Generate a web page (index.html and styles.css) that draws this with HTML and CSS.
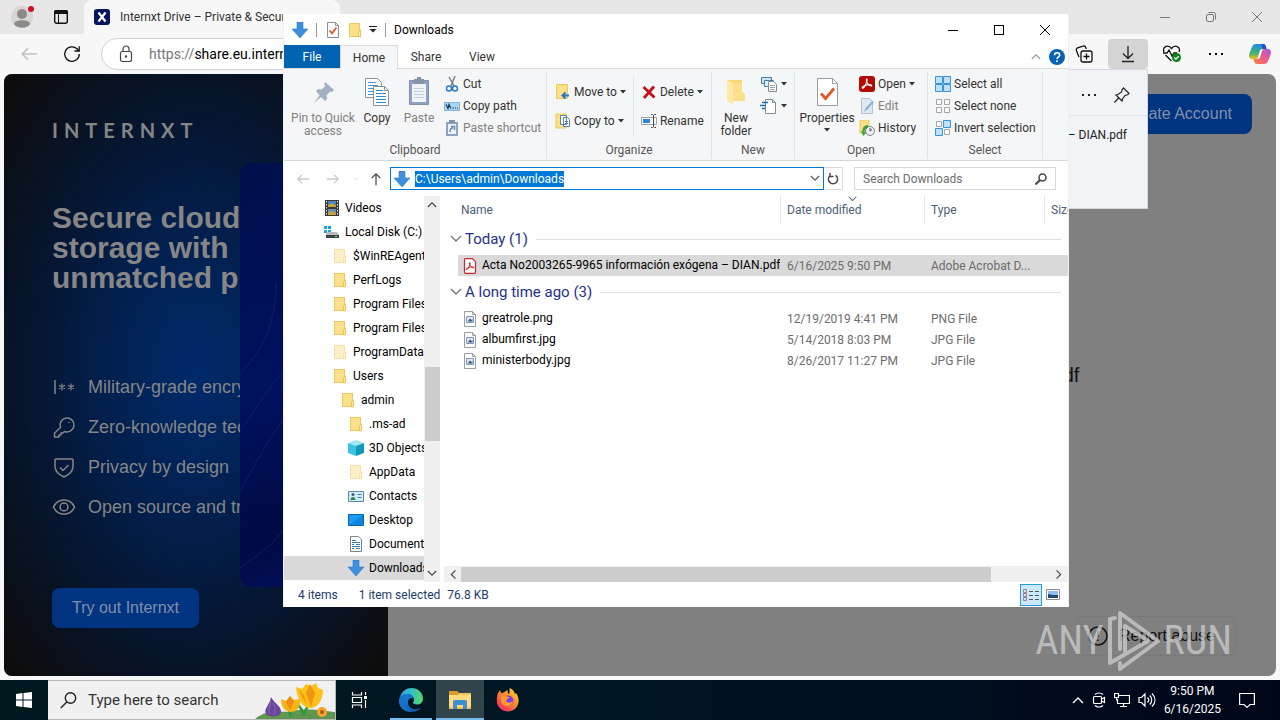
FILE: index.html
```html
<!DOCTYPE html>
<html lang="en">
<head>
    <meta charset="UTF-8">
    <meta name="viewport" content="width=device-width, initial-scale=1.0">
    <title>Downloads</title>
    <link rel="stylesheet" href="styles.css">
</head>
<body>
    <!-- shared icons -->
    <svg class="sprite" aria-hidden="true">
        <symbol id="i-down" viewBox="0 0 16 16">
            <path d="M5 0h6v7h5l-8 9-8-9h5z" fill="#3c8fdc"/>
            <path d="M5 0h6v7h5l-8 9-8-9h5z" fill="none" stroke="#2f7dc6" stroke-width=".6"/>
        </symbol>
        <symbol id="i-folder" viewBox="0 0 16 16">
            <path d="M2 1h11v6.500l1 1V15H2z" fill="#ffe08a"/>
            <path d="M2.500 1.500h10V14.500h-10z" fill="none" stroke="#ecc75a"/>
            <path d="M11.500 15V9.500l2-1.500v7z" fill="#ffe9a8" stroke="#e3b945" stroke-width=".7"/>
        </symbol>
        <symbol id="i-check" viewBox="0 0 16 16">
            <path d="M2.500.5h8l3 3v12h-11z" fill="#fff" stroke="#8a8f96"/>
            <path d="M10.500.5v3h3" fill="none" stroke="#8a8f96"/>
            <path d="M4.500 8.500l2.500 2.800 4.500-5.800" fill="none" stroke="#e2592c" stroke-width="1.800"/>
        </symbol>
        <symbol id="i-image" viewBox="0 0 16 16">
            <path d="M2.500.5h8l3 3v12h-11z" fill="#fff" stroke="#9a9fa6"/>
            <path d="M10.500.5v3h3" fill="none" stroke="#9a9fa6"/>
            <path d="M4.500 5.500h7v6h-7z" fill="#dde6f2" stroke="#8397b3"/>
            <path d="M6 10l2-2.500L9.500 9l1-1v2.500H6z" fill="#3d5b86"/>
        </symbol>
        <symbol id="i-pdf" viewBox="0 0 16 16">
            <path d="M3.500.7h7l3 3v10.600a1 1 0 0 1-1 1h-9a1 1 0 0 1-1-1V1.700a1 1 0 0 1 1-1z" fill="#fff" stroke="#c8242b" stroke-width="1.200"/>
            <path d="M7.800 4.500c-1.200 0 .4 3.500 2 4.700 1.600 1.200 2.600.9 2 .1-.9-1-6.800.2-7.600 1.700-.5 1.100 1 .9 2-.8C7.400 8.200 8.700 4.500 7.800 4.500z" fill="none" stroke="#c8242b"/>
        </symbol>
        <symbol id="i-caret" viewBox="0 0 6 4"><path d="M0 0h6L3 3.500z" fill="currentColor"/></symbol>
        <symbol id="i-chev" viewBox="0 0 12 8"><path d="M1 1l5 5 5-5" fill="none" stroke="currentColor" stroke-width="1.400"/></symbol>
        <symbol id="i-arrow" viewBox="0 0 16 16"><path d="M15 8H2M7 3L2 8l5 5" fill="none" stroke="currentColor" stroke-width="1.500"/></symbol>
        <symbol id="i-min" viewBox="0 0 12 12"><path d="M1 6.500h10" stroke="currentColor"/></symbol>
        <symbol id="i-close" viewBox="0 0 12 12"><path d="M1 1l10 10M11 1L1 11" stroke="currentColor"/></symbol>
        <symbol id="i-dots" viewBox="0 0 16 16"><path d="M1 7h2v2H1zM7 7h2v2H7zM13 7h2v2h-2z" fill="currentColor"/></symbol>
    </svg>

    <div class="browser">
        <div class="browser-title">
            <div class="workspace">
                <button class="icon-btn" aria-label="Profile">
                    <svg width="24" height="24" viewBox="0 0 24 24">
                        <circle cx="11" cy="12" r="11" fill="#d8d6d4"/>
                        <circle cx="11" cy="9" r="5" fill="#8d8a88"/>
                        <path d="M3 19c0-5 16-5 16 0-3 5-13 5-16 0z" fill="#8d8a88"/>
                        <circle cx="20" cy="4" r="3" fill="#d30f25"/>
                    </svg>
                </button>
                <button class="icon-btn" aria-label="Tab actions">
                    <svg width="16" height="16" viewBox="0 0 16 16">
                        <rect x="1.700" y="1.700" width="12.600" height="12.600" rx="2" fill="none" stroke="#111" stroke-width="1.400"/>
                        <path d="M1 3a2 2 0 0 1 2-2h10a2 2 0 0 1 2 2v2H1z" fill="#111"/>
                        <path d="M5.500 5v9" stroke="#111"/>
                    </svg>
                </button>
            </div>
            <div class="tab">
                <svg width="16" height="16" viewBox="0 0 16 16">
                    <rect width="16" height="16" rx="3" fill="#07145e"/>
                    <path d="M4.500 3.500l7 9M11.500 3.500l-7 9" stroke="#fff" stroke-width="2.200"/>
                </svg>
                <span>Internxt Drive – Private &amp; Secure</span>
            </div>
            <div class="browser-caption">
                <button aria-label="Minimize"><svg width="12" height="12"><use href="#i-min"/></svg></button>
                <button aria-label="Restore">
                    <svg width="12" height="12" viewBox="0 0 12 12" fill="none" stroke="currentColor">
                        <rect x="1.500" y="3.500" width="7" height="7" rx="1.500"/>
                        <path d="M3.500 1.500h5a2 2 0 0 1 2 2v5"/>
                    </svg>
                </button>
                <button aria-label="Close"><svg width="12" height="12"><use href="#i-close"/></svg></button>
            </div>
        </div>

        <div class="browser-bar">
            <button class="icon-btn back" aria-label="Back"><svg width="18" height="18"><use href="#i-arrow"/></svg></button>
            <button class="icon-btn" aria-label="Reload">
                <svg width="18" height="18" viewBox="0 0 18 18" fill="none" stroke="#111" stroke-width="1.300">
                    <path d="M16.300 9A7.300 7.300 0 1 1 14 3.800L16 6"/>
                    <path d="M16.200 1.200V6h-4.800"/>
                </svg>
            </button>
            <label class="url">
                <svg width="14" height="18" viewBox="0 0 14 18" fill="none" stroke="#444" stroke-width="1.200">
                    <rect x="1.500" y="6.500" width="11" height="10" rx="2"/>
                    <path d="M4 6.500V4a3 3 0 0 1 6 0v2.500"/>
                    <circle cx="7" cy="11.500" r=".6" fill="#444"/>
                </svg>
                <span>https://</span><input type="text" value="share.eu.internxt.com" aria-label="Address">
            </label>
            <div class="browser-tools">
                <button class="icon-btn" aria-label="Collections">
                    <svg width="18" height="18" viewBox="0 0 18 18" fill="none" stroke="#111" stroke-width="1.300">
                        <rect x="6" y="6" width="11" height="11" rx="2"/>
                        <path d="M11.500 8.500v6M8.500 11.500h6M4 12l-2.600-6.500a2 2 0 0 1 1.200-2.600L8 1.100a2 2 0 0 1 2.600 1.200l.7 1.800"/>
                    </svg>
                </button>
                <button class="icon-btn active" aria-label="Downloads">
                    <svg width="16" height="18" viewBox="0 0 16 18" fill="none" stroke="#222" stroke-width="1.300">
                        <path d="M8 1v12M3 8.500l5 5 5-5M2 16.500h12"/>
                    </svg>
                </button>
                <button class="icon-btn" aria-label="Browser essentials">
                    <svg width="20" height="18" viewBox="0 0 20 18" fill="none" stroke="#111" stroke-width="1.300">
                        <path d="M2 7C0 2 6-1 9.500 3.500 13-1 19 2 17 7M3.500 10l6 6"/>
                        <path d="M1 8h4l2-3 3 6 2-3h3"/>
                        <circle cx="14.500" cy="12.500" r="4.500" fill="#12801c" stroke="none"/>
                        <path d="M12.300 12.500l1.600 1.600 2.800-2.900" stroke="#fff"/>
                    </svg>
                </button>
                <button class="icon-btn" aria-label="Settings"><svg width="16" height="16"><use href="#i-dots"/></svg></button>
                <button class="icon-btn" aria-label="Copilot">
                    <svg width="22" height="20" viewBox="0 0 22 20">
                        <defs>
                            <linearGradient id="cp1" x1="0" y1="0" x2="0" y2="1"><stop offset="0" stop-color="#1b8ee6"/><stop offset=".6" stop-color="#3fb27a"/><stop offset="1" stop-color="#f2c318"/></linearGradient>
                            <linearGradient id="cp2" x1="1" y1="0" x2="0" y2="1"><stop offset="0" stop-color="#a15be8"/><stop offset=".5" stop-color="#ee5a8c"/><stop offset="1" stop-color="#f58a3a"/></linearGradient>
                        </defs>
                        <path d="M7 0h7c2 0 2.500 1 3 3l.5 2h-4c-2 0-2.500 1-3 3l-1.500 5c-.5 1.500-1 2-2.500 2H3c-3 0-3.500-3-2.500-6L3 3c.7-2 2-3 4-3z" fill="url(#cp1)"/>
                        <path d="M15 20H8c-2 0-2.500-1-3-3l-.5-2h4c2 0 2.500-1 3-3L13 7c.5-1.500 1-2 2.500-2H19c3 0 3.500 3 2.500 6L19 17c-.7 2-2 3-4 3z" fill="url(#cp2)"/>
                        <path d="M12 0h2c2 0 2.500 1 3 3l.5 2h-4z" fill="#2352c8"/>
                    </svg>
                </button>
            </div>
        </div>

        <div class="page">
            <aside class="promo">
                <div class="brand">INTERNXT</div>
                <h1>Secure cloud storage with unmatched privacy</h1>
                <ul>
                    <li>
                        <svg width="24" height="24" viewBox="0 0 24 24" fill="none" stroke="currentColor" stroke-width="1.500">
                            <path d="M3 5v14"/>
                            <path d="M10 8.500v7M7 10.300l6 3.500M13 10.300l-6 3.500M19 8.500v7M16 10.300l6 3.500M22 10.300l-6 3.500" stroke-width="1.200"/>
                        </svg>
                        Military-grade encryption
                    </li>
                    <li>
                        <svg width="24" height="24" viewBox="0 0 24 24" fill="none" stroke="currentColor" stroke-width="1.500">
                            <path d="M8.500 12.500a7 7 0 1 1 4 4L11 18H9v2H7v2H2.500v-4z" stroke-linejoin="round"/>
                            <circle cx="17" cy="7.500" r=".8" fill="currentColor" stroke="none"/>
                        </svg>
                        Zero-knowledge technology
                    </li>
                    <li>
                        <svg width="24" height="24" viewBox="0 0 24 24" fill="none" stroke="currentColor" stroke-width="1.500">
                            <path d="M4 4h16a1 1 0 0 1 1 1v6c0 6-4.500 9-9 11-4.500-2-9-5-9-11V5a1 1 0 0 1 1-1z"/>
                            <path d="M8 12.500l3 3 5.500-5.500"/>
                        </svg>
                        Privacy by design
                    </li>
                    <li>
                        <svg width="24" height="24" viewBox="0 0 24 24" fill="none" stroke="currentColor" stroke-width="1.500">
                            <path d="M1.500 12C5.500 2.500 18.500 2.500 22.500 12 18.500 21.500 5.500 21.500 1.500 12z"/>
                            <circle cx="12" cy="12" r="4"/>
                        </svg>
                        Open source and transparent
                    </li>
                </ul>
                <a class="page-btn" href="#">Try out Internxt</a>
                <div class="promo-art">
                    <svg width="148" height="424" viewBox="0 0 148 424" fill="none" stroke="#1c3f93" stroke-opacity=".35">
                        <path d="M0 210C22 190 36 160 36 120M0 268C20 240 34 215 60 190M0 330C40 250 60 240 80 200M0 405C20 390 40 380 60 340"/>
                    </svg>
                </div>
            </aside>
            <main class="share">
                <a class="page-btn account" href="#">Create Account</a>
                <p>Acta No2003265-9965 información exógena – DIAN.pdf</p>
                <button class="report">
                    <svg width="22" height="22" viewBox="0 0 22 22" fill="none" stroke="#141414" stroke-width="1.500">
                        <circle cx="11" cy="11" r="9"/>
                        <path d="M11 6v6M11 14.500v1.500"/>
                    </svg>
                    Report abuse
                </button>
            </main>
        </div>
    </div>

    <div class="flyout">
        <div class="flyout-head">
            <button class="icon-btn" aria-label="More"><svg width="16" height="16"><use href="#i-dots"/></svg></button>
            <button class="icon-btn" aria-label="Pin">
                <svg width="18" height="18" viewBox="0 0 18 18" fill="none" stroke="#222" stroke-width="1.200">
                    <path d="M10.500 2l5.500 5.500-1.500 1.300-2.500.7-2.500 3.500-.5 2L3 9l2-.5L8.500 6l.7-2.500zM5.500 12L1.500 16.500"/>
                </svg>
            </button>
        </div>
        <a href="#">– DIAN.pdf</a>
    </div>

    <div class="explorer">
        <div class="titlebar">
            <svg width="16" height="16"><use href="#i-down"/></svg>
            <i class="bar"></i>
            <svg width="16" height="16"><use href="#i-check"/></svg>
            <svg width="16" height="16"><use href="#i-folder"/></svg>
            <svg class="qat" width="8" height="7" viewBox="0 0 8 7"><path d="M0 .5h8" stroke="#222"/><path d="M.5 3h7L4 6.500z" fill="#222"/></svg>
            <i class="bar"></i>
            <span>Downloads</span>
            <div class="caption">
                <button aria-label="Minimize"><svg width="12" height="12"><use href="#i-min"/></svg></button>
                <button aria-label="Maximize"><svg width="12" height="12" viewBox="0 0 12 12"><rect x="1.500" y="1.500" width="9" height="9" fill="none" stroke="#000"/></svg></button>
                <button aria-label="Close"><svg width="12" height="12"><use href="#i-close"/></svg></button>
            </div>
        </div>

        <div class="menu">
            <button class="file">File</button>
            <button class="current">Home</button>
            <button>Share</button>
            <button>View</button>
            <span class="menu-end">
                <svg class="flip" width="10" height="7"><use href="#i-chev"/></svg>
                <svg width="16" height="16" viewBox="0 0 16 16">
                    <circle cx="8" cy="8" r="8" fill="#0a62b5"/>
                    <path d="M5.500 6.200c0-3.400 5.200-3.200 5.200-.3C10.700 7.800 8 7.800 8 10M8 11.200v1.800" fill="none" stroke="#fff" stroke-width="1.600"/>
                </svg>
            </span>
        </div>

        <div class="ribbon">
            <section class="group">
                <div class="tools clipboard">
                    <button class="big off">
                        <svg width="32" height="32" viewBox="0 0 32 32" fill="#a3b0c2"><path d="M18 6l9 8-2 2-2-.5-3.500 4 .5 3.500-2 2-4-4-7 6 5.500-7.500L9 15l2-2 3.500.5L18.500 10 17 8z"/></svg>
                        Pin to Quick access
                    </button>
                    <button class="big">
                        <svg width="32" height="32" viewBox="0 0 32 32">
                            <path d="M4.500 2.500h12l4 4v15h-16z" fill="#fff" stroke="#8c9199"/>
                            <path d="M7 6.500h8M7 9.500h10M7 12.500h10M7 15.500h10M7 18.500h10" stroke="#4a94d8"/>
                            <path d="M12.500 10.500h11l4 4v15h-15z" fill="#fff" stroke="#8c9199"/>
                            <path d="M23.500 10.500v4h4" fill="none" stroke="#8c9199"/>
                            <path d="M15 14.500h7M15 17.500h10M15 20.500h10M15 23.500h10M15 26.500h10" stroke="#2f86d6"/>
                        </svg>
                        Copy
                    </button>
                    <button class="big off">
                        <svg width="32" height="32" viewBox="0 0 32 32">
                            <path d="M6.500 4.500h19v24h-19z" fill="#8fa2c0" stroke="#7e90ad"/>
                            <path d="M9 8h14v18H9z" fill="#f0f4fa"/>
                            <path d="M11 3h10v5H11zM14 1h4v3h-4z" fill="#8693a8"/>
                            <path d="M11 12.500h10M11 15.500h10M11 18.500h10M11 21.500h10" stroke="#c3cfe0"/>
                        </svg>
                        Paste
                    </button>
                    <div class="stack">
                        <button>
                            <svg width="16" height="16" viewBox="0 0 16 16" fill="none"><path d="M5 1l5 9M11 0L7 10" stroke="#76808c" stroke-width="1.500"/><circle cx="5" cy="12.500" r="2.500" stroke="#2d7fc8" stroke-width="1.500"/><circle cx="11" cy="12.500" r="2.500" stroke="#2d7fc8" stroke-width="1.500"/></svg>
                            Cut
                        </button>
                        <button>
                            <svg width="16" height="16" viewBox="0 0 16 16"><rect x=".5" y="4.500" width="15" height="8" fill="#a8d4f5" stroke="#8ab4d6"/><path d="M2 6.500l2 4 1-4 2 4M8.500 10h1.500M11 10h1M13 10h1" stroke="#16385c" fill="none" stroke-width="1.200"/></svg>
                            Copy path
                        </button>
                        <button class="off">
                            <svg width="16" height="16" viewBox="0 0 16 16"><path d="M2 2h12v14H2z" fill="#8fa2c0"/><path d="M4 4h8v10H4z" fill="#edf2f9"/><path d="M5 0h6v3H5z" fill="#7e90ad"/><path d="M6 12c0-3 1-4 3-4M7 6.500h3.500V10" fill="none" stroke="#6f88b0" stroke-width="1.500"/></svg>
                            Paste shortcut
                        </button>
                    </div>
                </div>
                <h2>Clipboard</h2>
            </section>

            <section class="group">
                <div class="tools organize">
                    <div class="stack wide">
                        <button>
                            <svg width="16" height="16" viewBox="0 0 16 16"><path d="M1.500.5h11v14h-11z" fill="#ffe08a" stroke="#ecc75a"/><path d="M14 11.500H8M10.500 8.500l-3 3 3 3" fill="none" stroke="#2a76c4" stroke-width="2"/></svg>
                            Move to <svg width="6" height="4"><use href="#i-caret"/></svg>
                        </button>
                        <button>
                            <svg width="16" height="16" viewBox="0 0 16 16"><path d="M1 1h10v14H1z" fill="#ffe08a" stroke="#ecc75a"/><path d="M5.500 2.500h6v9h-6zM8.500 4.500h4l2 2v7h-6z" fill="#fff" stroke="#5580b4"/><path d="M10 8.500h3M10 10.500h3" stroke="#5580b4"/></svg>
                            Copy to <svg width="6" height="4"><use href="#i-caret"/></svg>
                        </button>
                    </div>
                    <div class="stack wide ruled">
                        <button>
                            <svg width="16" height="16" viewBox="0 0 16 16"><path d="M2.500 3l11 10.500M13 2.500L3 14" stroke="#c8101c" stroke-width="2.800"/></svg>
                            Delete <svg width="6" height="4"><use href="#i-caret"/></svg>
                        </button>
                        <button>
                            <svg width="16" height="16" viewBox="0 0 16 16" fill="none"><path d="M.5 4.500h15v7H.5z" fill="#fff" stroke="#9aa3ad"/><path d="M2 6h7v4H2z" fill="#2f86d0"/><path d="M12.500 2v12M10 1.500h1.500l1 1 1-1H15M10 14.500h1.500l1-1 1 1H15" stroke="#444"/></svg>
                            Rename
                        </button>
                    </div>
                </div>
                <h2>Organize</h2>
            </section>

            <section class="group">
                <div class="tools new">
                    <button class="big">
                        <svg width="32" height="32" viewBox="0 0 32 32"><path d="M7 4h15v12l2 3v6H9z" fill="#f8d775"/><path d="M7 4l6 3v22l-6-4z" fill="#ffe9a6"/><path d="M13 7h9v9l3 2v7H13z" fill="#fbdf8a"/></svg>
                        New folder
                    </button>
                    <div class="stack">
                        <button aria-label="New item">
                            <svg width="18" height="18" viewBox="0 0 18 18"><path d="M1.500 2.500h10v6h-10z" fill="#cfe3f3" stroke="#3f7fae"/><path d="M4.500 5.500h9v6h-9z" fill="#e4eef7" stroke="#3f7fae"/><path d="M8.500 6.500h5l3 3v7h-8z" fill="#fff" stroke="#858b92"/><path d="M10 10.500h5M10 12.500h5M10 14.500h5" stroke="#9aa3ad"/></svg>
                            <svg width="6" height="4"><use href="#i-caret"/></svg>
                        </button>
                        <button aria-label="Easy access">
                            <svg width="18" height="18" viewBox="0 0 18 18"><path d="M5.500 2.500h7l3 3v11h-10z" fill="#fff" stroke="#858b92"/><path d="M12.500 2.500v3h3" fill="none" stroke="#858b92"/><path d="M2 5.500h6M0 8.500h6M2 11.500h3" stroke="#1c6fb8" stroke-width="1.300"/></svg>
                            <svg width="6" height="4"><use href="#i-caret"/></svg>
                        </button>
                    </div>
                </div>
                <h2>New</h2>
            </section>

            <section class="group">
                <div class="tools open">
                    <button class="big">
                        <svg width="32" height="32" viewBox="0 0 32 32"><path d="M6.500 2.500h15l5 5v22h-20z" fill="#fff" stroke="#9a9fa6"/><path d="M21.500 2.500v5h5" fill="none" stroke="#9a9fa6"/><path d="M10 17.500l4.500 5 8.500-10" fill="none" stroke="#e2592c" stroke-width="2.800"/></svg>
                        Properties
                        <svg width="6" height="4"><use href="#i-caret"/></svg>
                    </button>
                    <div class="stack">
                        <button>
                            <svg width="16" height="16" viewBox="0 0 16 16"><rect width="16" height="16" rx="3" fill="#b30b00"/><path d="M7.800 3c-1.400 0 .2 4.500 2.200 6 2 1.300 3.300 1 2.500.1-1-1.200-8.500.3-9.200 2.400-.4 1.400 1.200 1 2.400-1.100C7.200 7.700 8.800 3 7.800 3z" fill="none" stroke="#fff" stroke-width="1.100"/></svg>
                            Open <svg width="6" height="4"><use href="#i-caret"/></svg>
                        </button>
                        <button class="off">
                            <svg width="16" height="16" viewBox="0 0 16 16"><path d="M2.500.5h8l3 3v12h-11z" fill="#dfe8f3" stroke="#b4c1d2"/><path d="M15 4l-7 8-2.500 1.500L6 11l7-8z" fill="#8fb0d4"/></svg>
                            Edit
                        </button>
                        <button>
                            <svg width="16" height="16" viewBox="0 0 16 16"><path d="M1 0h9v13H1z" fill="#ffe08a" stroke="#ecc75a"/><circle cx="11" cy="11" r="4.500" fill="#e8edf2" stroke="#7b848e"/><path d="M11 8v3l2-1.500" stroke="#555" fill="none"/><path d="M9 5C4 5 3 9 3.500 12L1.500 11l3 5 3-4-2 .500C5.500 10 6.500 8 9 7.500z" fill="#3aa63a"/></svg>
                            History
                        </button>
                    </div>
                </div>
                <h2>Open</h2>
            </section>

            <section class="group">
                <div class="tools select">
                    <div class="stack">
                        <button>
                            <svg width="16" height="16" viewBox="0 0 16 16" fill="#bfe0fa" stroke="#3a94dc"><path d="M.5.5h7v7h-7zM8.500.5h7v7h-7zM.5 8.500h7v7h-7zM8.500 8.500h7v7h-7z"/></svg>
                            Select all
                        </button>
                        <button>
                            <svg width="16" height="16" viewBox="0 0 16 16" fill="#fff" stroke="#a5a5a5"><path d="M1.500 1.500h5v5h-5zM9.500 1.500h5v5h-5zM1.500 9.500h5v5h-5zM9.500 9.500h5v5h-5z"/></svg>
                            Select none
                        </button>
                        <button>
                            <svg width="16" height="16" viewBox="0 0 16 16"><path d="M1.500 1.500h5v5h-5zM9.500 9.500h5v5h-5z" fill="#fff" stroke="#a5a5a5"/><path d="M8.500.5h7v7h-7zM.5 8.500h7v7h-7z" fill="#bfe0fa" stroke="#3a94dc"/></svg>
                            Invert selection
                        </button>
                    </div>
                </div>
                <h2>Select</h2>
            </section>
        </div>

        <div class="nav">
            <button class="dim" aria-label="Back"><svg width="14" height="14"><use href="#i-arrow"/></svg></button>
            <button class="dim turn" aria-label="Forward"><svg width="14" height="14"><use href="#i-arrow"/></svg></button>
            <button class="dim recent" aria-label="Recent"><svg width="6" height="4"><use href="#i-chev"/></svg></button>
            <button class="up" aria-label="Up"><svg width="14" height="14"><use href="#i-arrow"/></svg></button>
            <div class="address">
                <svg width="16" height="16"><use href="#i-down"/></svg>
                <input id="address" type="text" value="C:\Users\admin\Downloads" aria-label="Path">
                <svg width="10" height="7"><use href="#i-chev"/></svg>
            </div>
            <button class="refresh" aria-label="Refresh">
                <svg width="12" height="12" viewBox="0 0 12 12" fill="none" stroke="#444" stroke-width="1.400"><path d="M8.500 2.300A4.600 4.600 0 1 1 3.500 2.300M3 0v3.500h3.500"/></svg>
            </button>
            <label class="search">
                <input type="text" placeholder="Search Downloads" aria-label="Search Downloads">
                <svg width="12" height="12" viewBox="0 0 12 12" fill="none" stroke="#444" stroke-width="1.500"><circle cx="7.500" cy="4.500" r="3.500"/><path d="M5 7L.5 11.500" stroke-width="2"/></svg>
            </label>
        </div>

        <div class="content">
            <div class="side">
                <ul class="tree">
                    <li class="l1"><svg width="16" height="16" viewBox="0 0 16 16"><path d="M1 0h14v16H1z" fill="#3a3a3a"/><path d="M4 1h8v6H4z" fill="#4f83c4"/><path d="M4 9h8v6H4z" fill="#6c8fb0"/><path d="M4 5l4-2 4 3v1H4zM4 13l3-2 5 2v2H4z" fill="#c9a43c"/><path d="M2.500 1v14M13.500 1v14" stroke="#ddd" stroke-dasharray="1.500 1.500"/></svg>Videos</li>
                    <li class="l1"><svg width="16" height="16" viewBox="0 0 16 16"><path d="M0 2h3v3H0zM4 2h3v3H4zM0 6h3v3H0zM4 6h3v3H4z" fill="#19a7e0"/><path d="M3 8h10l2 3H2z" fill="#b9bec3"/><path d="M2 11h13v3H2z" fill="#3b4146"/><path d="M11 12.500h2" stroke="#5dff6a"/></svg>Local Disk (C:)</li>
                    <li class="l2 faded"><svg width="16" height="16"><use href="#i-folder"/></svg>$WinREAgent</li>
                    <li class="l2"><svg width="16" height="16"><use href="#i-folder"/></svg>PerfLogs</li>
                    <li class="l2"><svg width="16" height="16"><use href="#i-folder"/></svg>Program Files</li>
                    <li class="l2"><svg width="16" height="16"><use href="#i-folder"/></svg>Program Files</li>
                    <li class="l2 faded"><svg width="16" height="16"><use href="#i-folder"/></svg>ProgramData</li>
                    <li class="l2"><svg width="16" height="16"><use href="#i-folder"/></svg>Users</li>
                    <li class="l3"><svg width="16" height="16"><use href="#i-folder"/></svg>admin</li>
                    <li class="l4"><svg width="16" height="16"><use href="#i-folder"/></svg>.ms-ad</li>
                    <li class="l4"><svg width="16" height="16" viewBox="0 0 16 16"><path d="M0 3l8-3 8 3-8 3z" fill="#9be6f5"/><path d="M0 3l8 3v10l-8-3z" fill="#38c3df"/><path d="M16 3L8 6v10l8-3z" fill="#1496bd"/></svg>3D Objects</li>
                    <li class="l4 faded"><svg width="16" height="16"><use href="#i-folder"/></svg>AppData</li>
                    <li class="l4"><svg width="16" height="16" viewBox="0 0 16 16"><path d="M.5 3.500h15v10H.5z" fill="#d5ecf7" stroke="#5e8aa8"/><circle cx="5" cy="6.500" r="1.500" fill="#2d5f8a"/><path d="M2.500 12c0-4 5-4 5 0z" fill="#2a8a50"/><path d="M9.500 6.500h4M9.500 9.500h4" stroke="#3c86c0"/></svg>Contacts</li>
                    <li class="l4"><svg width="16" height="16" viewBox="0 0 16 16"><path d="M.5 2.500h15v11H.5z" fill="#1b9af0" stroke="#0b62a8"/><path d="M1 13l14-10v10z" fill="#0a86e0"/></svg>Desktop</li>
                    <li class="l4"><svg width="16" height="16" viewBox="0 0 16 16"><path d="M2.500.5h8l3 3v12h-11z" fill="#fff" stroke="#7b848e"/><path d="M4 4.500h4M4 6.500h8M4 8.500h2M8 8.500h4M4 10.500h8M4 12.500h2M8 12.500h4" stroke="#2f7fb8"/></svg>Documents</li>
                    <li class="l4 selected"><svg width="16" height="16"><use href="#i-down"/></svg>Downloads</li>
                </ul>
                <div class="vscroll">
                    <svg class="flip" width="10" height="7"><use href="#i-chev"/></svg>
                    <i></i>
                    <svg width="10" height="7"><use href="#i-chev"/></svg>
                </div>
            </div>

            <div class="files">
                <table>
                    <colgroup><col><col class="c-date"><col class="c-type"><col class="c-size"></colgroup>
                    <thead>
                        <tr><th>Name</th><th class="sorted">Date modified<svg width="9" height="6"><use href="#i-chev"/></svg></th><th>Type</th><th>Size</th></tr>
                    </thead>
                    <tbody>
                        <tr class="section"><th colspan="4"><span><svg width="12" height="8"><use href="#i-chev"/></svg>Today (1)</span></th></tr>
                        <tr class="picked"><td><svg width="16" height="16"><use href="#i-pdf"/></svg>Acta No2003265-9965 información exógena – DIAN.pdf</td><td>6/16/2025 9:50 PM</td><td>Adobe Acrobat D...</td><td></td></tr>
                        <tr class="section"><th colspan="4"><span><svg width="12" height="8"><use href="#i-chev"/></svg>A long time ago (3)</span></th></tr>
                        <tr><td><svg width="16" height="16"><use href="#i-image"/></svg>greatrole.png</td><td>12/19/2019 4:41 PM</td><td>PNG File</td><td></td></tr>
                        <tr><td><svg width="16" height="16"><use href="#i-image"/></svg>albumfirst.jpg</td><td>5/14/2018 8:03 PM</td><td>JPG File</td><td></td></tr>
                        <tr><td><svg width="16" height="16"><use href="#i-image"/></svg>ministerbody.jpg</td><td>8/26/2017 11:27 PM</td><td>JPG File</td><td></td></tr>
                    </tbody>
                </table>
                <div class="hscroll">
                    <svg class="left" width="10" height="7"><use href="#i-chev"/></svg>
                    <i></i>
                    <svg class="right" width="10" height="7"><use href="#i-chev"/></svg>
                </div>
            </div>
        </div>

        <div class="status">
            <span>4 items</span>
            <span>1 item selected</span>
            <span class="size">76.8 KB</span>
            <div class="views">
                <button class="on" aria-label="Details"><svg width="16" height="14" viewBox="0 0 16 14" fill="none"><path d="M.5 1.500h3v3h-3zM.5 5.500h3v3h-3zM.5 9.500h3v3h-3z" stroke="#a07c88"/><path d="M6 3.500h4M12 3.500h4M6 7.500h4M12 7.500h4M6 11.500h4M12 11.500h4" stroke="#555"/></svg></button>
                <button aria-label="Large icons"><svg width="14" height="11" viewBox="0 0 14 11"><path d="M.5.5h13v10H.5z" fill="#fff" stroke="#8c8c9c"/><path d="M2 2h10v7H2z" fill="#8fc1ef"/><path d="M2 5l5 1 5 0v3H2z" fill="#24486e"/></svg></button>
            </div>
        </div>
    </div>

    <div class="watermark" aria-hidden="true">
        <span>ANY</span>
        <svg width="56" height="64" viewBox="0 0 56 64" fill="none" stroke="#c9c9c9" stroke-width="4" stroke-linejoin="round" stroke-linecap="round">
            <path d="M14 40V4l38 28-38 28v-6"/>
            <path d="M9 9l-5 1v44L42 32 19 17v25"/>
        </svg>
        <span>RUN</span>
    </div>

    <footer class="taskbar">
        <button class="start" aria-label="Start"><svg width="16" height="16" viewBox="0 0 16 16" fill="#fff"><path d="M0 2l6.500-1v6.500H0zM7.500.9L16 0v7.500H7.500zM0 8.500h6.500V15L0 14zM7.500 8.500H16V16l-8.500-1z"/></svg></button>
        <label class="find">
            <svg width="17" height="17" viewBox="0 0 17 17" fill="none" stroke="#222" stroke-width="1.400"><circle cx="10.500" cy="6" r="5.200"/><path d="M6.800 10L.8 16"/></svg>
            <input type="text" placeholder="Type here to search" aria-label="Search">
            <svg class="flowers" width="80" height="38" viewBox="0 0 80 38">
                <path d="M0 38C12 28 25 31 34 31 50 26 68 30 80 31v7z" fill="#5f9650"/>
                <path d="M36 36c-1-6-3-8-7-11M49 34c-2-7-5-9-9-13M49 34c1-7 4-8 9-14" fill="none" stroke="#2f9a3c" stroke-width="2.500"/>
                <path d="M16 16c4 7 10 9 10 15 0 5-12 6-15 2-3-5 4-9 5-17z" fill="#6a459c"/>
                <path d="M16 20c-1 6-3 8-1 13M18 22c3 5 2 8 1 12" fill="none" stroke="#8b67b8"/>
                <path d="M26 18l5 2 4-5 4 4 6-1c1 9-4 13-9 13s-10-4-10-13z" fill="#f7b416"/>
                <path d="M35 15l4 6-4 8-4-8z" fill="#ee8b12"/>
                <path d="M41 6l6 2 4-5 5 2 5-3 2 5 5 2c0 11-6 18-13 18S42 19 41 6z" fill="#fcc21a"/>
                <path d="M55 3l5 9-4 14-5-14zM43 8l6 6 3 11z" fill="#f0960f"/>
                <circle cx="67" cy="31" r="5" fill="#f6a52a"/><circle cx="67" cy="31" r="2" fill="#a85a14"/>
            </svg>
        </label>
        <button class="app" aria-label="Task View"><svg width="18" height="18" viewBox="0 0 18 18" fill="none" stroke="#fff" stroke-width="1.200"><path d="M1.500 1v3h9V1M1.500 6.500h9v5h-9zM1.500 17v-3h9v3M14.500 1v3M14.500 9v8"/><path d="M13 5h3v3h-3z" fill="#fff" stroke="none"/></svg></button>
        <button class="app running" aria-label="Edge">
            <svg width="24" height="24" viewBox="0 0 24 24">
                <defs>
                    <linearGradient id="ed1" x1="0" y1="0" x2="1" y2="0"><stop offset="0" stop-color="#2aa3e8"/><stop offset=".5" stop-color="#32c1c8"/><stop offset="1" stop-color="#5ed660"/></linearGradient>
                    <linearGradient id="ed2" x1="0" y1="0" x2="1" y2="1"><stop offset="0" stop-color="#1a8bdc"/><stop offset="1" stop-color="#0c4fa0"/></linearGradient>
                </defs>
                <path d="M1 10C2 3 8 0 12.500 0 19 0 24 5 24 10.500c0 4-3 6-6 6-2.500 0-4-1-4-2 0-.6 1-1.200 1-3C15 8 11 6 8 6c-3 0-6 2-7 4z" fill="url(#ed1)"/>
                <path d="M0 13C0 8 4 6 8 6c3 0 7 2 7 5.500 0-2-6-2.500-6 3C9 19 13 22 18 21c2-.4 3-1 3.700-1-.7 1-4 4-9.700 4C5 24 0 19 0 13z" fill="url(#ed2)"/>
                <path d="M8 6.500c-4 4-3 13 3 17C5 23 0 19 0 13 0 9 4 6.500 8 6.500z" fill="#1472c9"/>
            </svg>
        </button>
        <button class="app running focus" aria-label="File Explorer">
            <svg width="22" height="20" viewBox="0 0 22 20">
                <path d="M0 1h8l2 2h12v16H0z" fill="#f5c35a"/><path d="M0 1h8l2 2-1 2H0z" fill="#d89b28"/><path d="M0 5h22v12H0z" fill="#ffdb80"/>
                <path d="M4 19v-7a2 2 0 0 1 2-2h10a2 2 0 0 1 2 2v7h-4v-4H8v4z" fill="#3d8fd1"/>
            </svg>
        </button>
        <button class="app" aria-label="Firefox">
            <svg width="24" height="24" viewBox="0 0 24 24">
                <defs><linearGradient id="ff" x1="1" y1="0" x2=".2" y2="1"><stop offset="0" stop-color="#ffe03a"/><stop offset=".45" stop-color="#ff9226"/><stop offset="1" stop-color="#f0246c"/></linearGradient></defs>
                <path d="M2 5l2-3 1 3 3-.5C9.500 3 11 2 12 2c-1 1.500-.5 3 1 4 1-2 .5-4 .5-6 3 1 4.500 3 5.500 6l1-1c2 3 3 6 2.500 9-1 6-5 9.500-10.500 9.500S1 19.500.8 13.500C.7 10 1 7 2 5z" fill="url(#ff)"/>
                <circle cx="12.500" cy="12.500" r="5" fill="#7a3fe0"/>
                <path d="M5 9c3-2 6 0 8.500 0-.5 2-3 1.500-3.500 3.500 1 3 5 2.500 7 .5-1 5-7 6.500-10 3.500C5 14.500 4.500 12 5 9z" fill="#ff9a2c"/>
            </svg>
        </button>
        <div class="tray">
            <svg class="flip" width="12" height="8"><use href="#i-chev"/></svg>
            <svg width="14" height="16" viewBox="0 0 14 16" fill="none" stroke="#fff" stroke-width="1.200"><path d="M3 2.500C5 .5 9 .5 11 2.500M3 13.500c2 2 6 2 8 0"/><rect x="1.500" y="4.500" width="8" height="7" rx="1"/><path d="M9.500 7l3-1.500v5L9.500 9"/></svg>
            <svg width="16" height="16" viewBox="0 0 16 16" fill="none" stroke="#fff" stroke-width="1.200"><path d="M4.500 3.500h11v8H3.500V7M9.500 11.500v3M6 14.500h7M.5 1.500h4v4h-4zM2.500 5.500v3"/></svg>
            <svg width="18" height="16" viewBox="0 0 18 16" fill="none" stroke="#fff" stroke-width="1.200"><path d="M1 5.500h2.500L7 2v12l-3.500-3.500H1zM9.500 5.500c1.500 1.500 1.500 3.500 0 5M11.800 3.500c2.500 2.500 2.500 6.500 0 9M14 1.500c4 4 4 9 0 13"/></svg>
            <time>9:50 PM<br>6/16/2025</time>
            <svg class="note" width="16" height="16" viewBox="0 0 16 16" fill="none" stroke="#fff" stroke-width="1.200"><path d="M.6 1.500h14.800v11H11L8 15.400 5 12.500H.6z"/></svg>
        </div>
    </footer>

    <script>
        // keep the path highlighted when the window opens
        document.getElementById('address').select();
    </script>
</body>
</html>
```
FILE: styles.css
```css
* {
    box-sizing: border-box;
}

body {
    margin: 0;
    height: 100vh;
    display: flex;
    flex-direction: column;
    position: relative;
    overflow: hidden;
    font-family: Roboto, "Open Sans", sans-serif;
    font-size: 12px;
    line-height: 16px;
    color: #000;
    background: #f7f7f7;
}

button,
input {
    font: inherit;
    color: inherit;
    border: none;
    background: none;
    padding: 0;
    margin: 0;
    outline: none;
    min-width: 0;
}

a {
    color: inherit;
    text-decoration: none;
}

svg {
    flex: none;
    display: block;
}

ul {
    list-style: none;
    margin: 0;
    padding: 0;
}

.sprite {
    position: absolute;
    width: 0;
    height: 0;
}

.flip {
    transform: rotate(180deg);
}

/* browser */
.browser {
    flex: 1;
    min-height: 0;
    display: flex;
    flex-direction: column;
}

.browser-title {
    height: 34px;
    display: flex;
    background: #e7e7e7;
}

.icon-btn {
    display: flex;
    align-items: center;
    justify-content: center;
}

.workspace {
    width: 84px;
    display: flex;
    align-items: center;
    gap: 18px;
    padding-left: 11px;
}

.tab {
    width: 256px;
    display: flex;
    align-items: center;
    gap: 10px;
    padding-left: 10px;
    background: #f7f7f7;
    border-radius: 8px 8px 0 0;
    color: #333;
    white-space: nowrap;
    overflow: hidden;
}

.browser-caption {
    margin-left: auto;
    display: flex;
    color: #777;
}

.browser-caption button {
    width: 46px;
    display: flex;
    align-items: center;
    justify-content: center;
}

.browser-bar {
    height: 40px;
    display: flex;
    align-items: center;
    gap: 25px;
    padding-left: 20px;
    background: #f7f7f7;
}

.back {
    color: #c4c4c4;
}

.url {
    flex: 1;
    height: 32px;
    margin-left: -5px;
    display: flex;
    align-items: center;
    padding: 0 17px;
    border: 1px solid #d0d0d0;
    border-radius: 16px;
    background: #fff;
    font-size: 14px;
}

.url svg {
    margin-right: 16px;
}

.url span {
    color: #767676;
}

.url input {
    flex: 1;
}

.browser-tools {
    display: flex;
    gap: 4px;
}

.browser-tools .icon-btn {
    width: 40px;
    height: 30px;
    border-radius: 4px;
}

.browser-tools .active {
    background: #d4d4d4;
}

.page {
    flex: 1;
    min-height: 0;
    margin: 0 4px 4px;
    display: flex;
    border-radius: 8px;
    overflow: hidden;
    background: #808080;
    font-family: "Liberation Sans", sans-serif;
    font-size: 16px;
}

.promo {
    width: 384px;
    padding: 44px 48px;
    position: relative;
    overflow: hidden;
    color: #868686;
    background: radial-gradient(ellipse at 50% 50%, #002a6c 0%, #021f4c 35%, #07142b 65%, #0d0d0d 95%);
}

.brand {
    font-family: Lato, sans-serif;
    font-weight: 700;
    font-size: 20px;
    line-height: 24px;
    letter-spacing: 6px;
}

.promo h1 {
    margin: 61px 0 74px;
    font-size: 30px;
    line-height: 30px;
}

.promo li {
    display: flex;
    align-items: center;
    gap: 12px;
    height: 40px;
    font-size: 18px;
    white-space: nowrap;
}

.page-btn {
    display: inline-block;
    padding: 0 20px;
    line-height: 40px;
    border-radius: 8px;
    background: #003380;
    color: #8090ab;
}

.promo .page-btn {
    margin-top: 61px;
}

.promo-art {
    position: absolute;
    top: 89px;
    left: 236px;
    right: 0;
    height: 424px;
    border-radius: 12px 0 0 12px;
    background: linear-gradient(160deg, #000f4c, #00115e 50%, #000a44 80%, #00105e);
}

.share {
    flex: 1;
    display: flex;
    flex-direction: column;
    align-items: flex-end;
    padding: 20px 24px;
    color: #111;
}

.share p {
    margin: auto;
    font-size: 20px;
}

.report {
    display: flex;
    align-items: center;
    gap: 10px;
    height: 40px;
    margin-right: 16px;
    padding: 0 20px 0 10px;
    border: 1px solid #797979;
    border-radius: 8px;
}

/* downloads popup of the browser */
.flyout {
    position: absolute;
    top: 69px;
    right: 132px;
    width: 320px;
    height: 140px;
    border: 1px solid #d5d8dc;
    background: #f1f3f7;
    color: #222;
}

.flyout-head {
    height: 46px;
    display: flex;
    align-items: center;
    justify-content: flex-end;
    gap: 16px;
    padding: 4px 16px 0 0;
    border-bottom: 1px solid #dfe2e6;
}

.flyout a {
    display: block;
    padding: 11px 20px;
    text-align: right;
}

/* explorer window */
.explorer {
    position: absolute;
    top: 14px;
    left: 283px;
    right: 211px;
    bottom: 113px;
    display: flex;
    flex-direction: column;
    background: #fff;
    border-left: 1px solid #f0f0f0;
    border-right: 1px solid #f0f0f0;
    overflow: hidden;
}

.titlebar {
    height: 31px;
    display: flex;
    align-items: center;
    gap: 6px;
    padding-left: 8px;
}

.bar {
    width: 1px;
    height: 14px;
    background: #999;
    margin: 0 2px;
}

.caption {
    margin-left: auto;
    display: flex;
    height: 100%;
}

.caption button {
    width: 46px;
    display: flex;
    align-items: center;
    justify-content: center;
}

.menu {
    height: 24px;
    display: flex;
    border-bottom: 1px solid #dadbdc;
    color: #333;
}

.menu button {
    width: 56px;
    border: 1px solid transparent;
    border-bottom: none;
}

.menu .file {
    background: #0063b1;
    color: #fff;
}

.menu .current {
    width: 58px;
    margin-bottom: -1px;
    background: #f5f6f7;
    border-color: #dadbdc;
}

.menu-end {
    margin-left: auto;
    display: flex;
    align-items: center;
    gap: 8px;
    padding-right: 3px;
    color: #999;
}

.ribbon {
    height: 92px;
    display: grid;
    grid-template-columns: 263px 165px 83px 133px 115px;
    background: #f5f6f7;
    border-bottom: 1px solid #d5d6d7;
    color: #333;
}

.group {
    display: flex;
    flex-direction: column;
    border-right: 1px solid #e2e3e4;
    margin: 3px 0 1px;
}

.group h2 {
    margin: 0;
    font-size: 12px;
    font-weight: 400;
    line-height: 18px;
    text-align: center;
    color: #555;
}

.tools {
    flex: 1;
    display: flex;
}

.clipboard {
    padding-left: 4px;
}

.big {
    display: flex;
    flex-direction: column;
    align-items: center;
    width: 48px;
    padding-top: 4px;
    line-height: 13px;
}

.big svg {
    margin-bottom: 4px;
}

.clipboard .big {
    width: 38px;
    margin-right: 4px;
}

.clipboard .big:first-child {
    width: 70px;
    margin-right: 0;
}

.off {
    color: #808080;
}

.stack {
    display: flex;
    flex-direction: column;
}

.stack button {
    height: 22px;
    display: flex;
    align-items: center;
    gap: 3px;
    white-space: nowrap;
}

.clipboard .stack {
    padding: 1px 0 0 2px;
}

.organize .stack {
    padding: 5px 0 0 8px;
}

.organize .stack button {
    height: 29px;
}

.organize .ruled {
    margin: 4px 0 4px 7px;
    padding: 1px 0 0 7px;
    border-left: 1px solid #e2e3e4;
}

.new .stack,
.open .stack,
.select .stack {
    padding-top: 1px;
}

.open .big {
    width: 64px;
}

.open .big svg + svg {
    margin: 3px 0 0;
}

.select {
    padding-left: 7px;
}

.nav {
    height: 35px;
    display: flex;
    align-items: center;
    padding: 0 12px 0 4px;
    color: #555;
}

.nav > button {
    display: flex;
    align-items: center;
    justify-content: center;
    width: 30px;
}

.nav .dim {
    color: #ccc;
}

.nav .turn svg {
    transform: rotate(180deg);
}

.nav .recent {
    width: 16px;
}

.nav .up {
    width: 24px;
}

.nav .up svg {
    transform: rotate(90deg);
}

.address {
    flex: 1;
    height: 23px;
    display: flex;
    align-items: center;
    gap: 5px;
    margin-left: 2px;
    padding: 0 3px;
    border: 1px solid #0078d7;
}

.address input {
    flex: 1;
    color: #000;
}

.address input::selection {
    background: #0078d7;
    color: #fff;
}

.nav .refresh {
    width: 19px;
    height: 23px;
    border: 1px solid #d9d9d9;
    border-left: none;
}

.search {
    width: 202px;
    height: 23px;
    display: flex;
    align-items: center;
    margin-left: 11px;
    padding: 0 8px;
    border: 1px solid #d9d9d9;
}

.search input {
    flex: 1;
}

.search input::placeholder {
    color: #6d6d6d;
}

.content {
    flex: 1;
    min-height: 0;
    display: flex;
}

.side {
    width: 156px;
    display: flex;
}

.tree {
    flex: 1;
    min-width: 0;
    overflow: hidden;
}

.tree li {
    height: 24px;
    display: flex;
    align-items: center;
    gap: 5px;
    white-space: nowrap;
}

.l1 {
    padding-left: 40px;
}

.l2 {
    padding-left: 48px;
}

.l3 {
    padding-left: 56px;
}

.l4 {
    padding-left: 64px;
}

.faded svg {
    opacity: .5;
}

.selected {
    background: #d9d9d9;
}

.vscroll {
    width: 16px;
    display: flex;
    flex-direction: column;
    align-items: center;
    padding: 5px 0;
    background: #f0f0f0;
    color: #444;
}

.vscroll i {
    width: 15px;
    height: 74px;
    margin: auto 0 129px;
    background: #cdcdcd;
}

.files {
    flex: 1;
    min-width: 0;
    margin-left: 4px;
    display: flex;
    flex-direction: column;
    justify-content: space-between;
}

table {
    width: 100%;
    border-collapse: separate;
    border-spacing: 0;
    table-layout: fixed;
    color: #6d6d6d;
}

.c-date {
    width: 144px;
}

.c-type {
    width: 120px;
}

.c-size {
    width: 24px;
}

th,
td {
    padding: 0;
    font-weight: 400;
    text-align: left;
    white-space: nowrap;
    overflow: hidden;
}

thead th {
    height: 27px;
    padding-left: 6px;
    border-left: 1px solid #e5e5e5;
    color: #4c607a;
    position: relative;
}

thead th:first-child {
    padding-left: 17px;
    border-left: none;
}

.sorted svg {
    position: absolute;
    top: 0;
    left: 47%;
}

.section th {
    height: 32px;
    padding: 0 7px 0 6px;
    color: #1e3287;
    font-size: 15px;
}

.section span {
    display: flex;
    align-items: center;
    gap: 3px;
}

.section svg {
    color: #777;
}

.section span::after {
    content: "";
    flex: 1;
    height: 1px;
    margin-left: 5px;
    background: #e0e0e0;
}

td {
    height: 21px;
    padding-left: 7px;
}

td:first-child {
    padding-left: 18px;
    color: #000;
}

td svg {
    display: inline-block;
    vertical-align: middle;
    margin-right: 4px;
}

.picked td {
    background: #d9d9d9;
}

.picked td:first-child {
    background: linear-gradient(90deg, #fff 14px, #d9d9d9 14px);
}

.hscroll {
    height: 16px;
    display: flex;
    align-items: center;
    background: #f0f0f0;
    color: #444;
    padding: 0 4px;
}

.hscroll i {
    width: 86%;
    height: 15px;
    margin: 0 auto 0 3px;
    background: #cdcdcd;
}

.left {
    transform: rotate(90deg);
}

.right {
    transform: rotate(-90deg);
}

.status {
    height: 25px;
    display: flex;
    align-items: center;
    gap: 21px;
    padding-left: 14px;
    color: #1e3a6e;
}

.status .size {
    margin-left: -14px;
}

.views {
    margin-left: auto;
    display: flex;
    gap: 4px;
    padding-right: 8px;
}

.views button {
    display: flex;
    align-items: center;
}

.views .on {
    width: 22px;
    height: 22px;
    justify-content: center;
    background: #cce8ff;
    border: 1px solid #26a0da;
}

/* overlay mark */
.watermark {
    position: absolute;
    right: 48px;
    bottom: 47px;
    display: flex;
    align-items: center;
    gap: 2px;
    color: #c9c9c9;
    font-family: "Roboto Condensed", "DejaVu Sans Condensed", Roboto, sans-serif;
    font-weight: 400;
    font-size: 40px;
    line-height: 64px;
    opacity: .8;
}

/* taskbar */
.taskbar {
    height: 40px;
    display: flex;
    background: linear-gradient(90deg, #00191f, #001523 50%, #00061a);
    color: #fff;
}

.taskbar button {
    width: 48px;
    display: flex;
    align-items: center;
    justify-content: center;
}

.find {
    width: 288px;
    display: flex;
    align-items: center;
    gap: 11px;
    padding-left: 12px;
    background: #f0f0f0;
    border: 1px solid #b8b8b8;
    border-left: none;
    font-size: 15px;
    color: #333;
}

.find input {
    flex: 1;
}

.find input::placeholder {
    color: #333;
}

.find .flowers {
    align-self: flex-end;
}

.taskbar .running {
    border-bottom: 2px solid #76b9ed;
    padding-top: 2px;
    width: 42px;
    margin: 0 4px 0 6px;
}

.taskbar .focus {
    width: 48px;
    margin: 0;
    background: #30444c;
}

.tray {
    margin-left: auto;
    display: flex;
    align-items: center;
    gap: 8px;
    padding-right: 25px;
}

.tray time {
    line-height: 18px;
    text-align: center;
}

.note {
    margin-left: 10px;
}
```
